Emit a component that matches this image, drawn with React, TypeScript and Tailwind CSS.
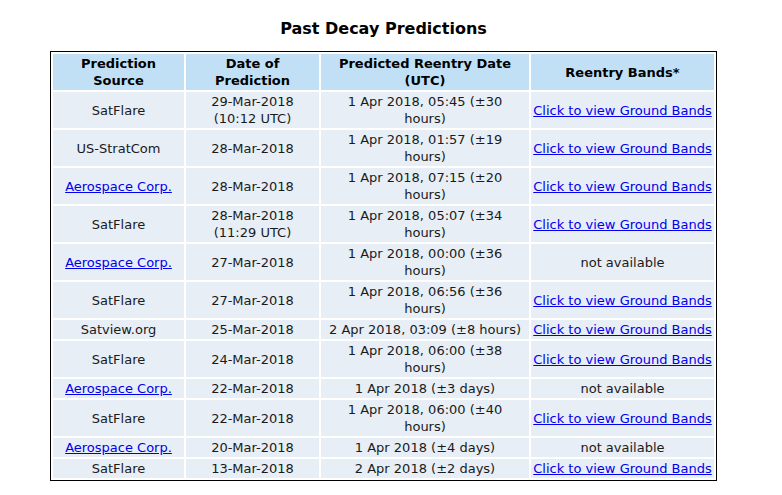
import React from 'react';

type Row = {
  source: string;
  sourceLink?: boolean;
  date: string[];
  reentry: string[];
  bands: boolean;
};

const rows: Row[] = [
  { source: 'SatFlare', date: ['29-Mar-2018', '(10:12 UTC)'], reentry: ['1 Apr 2018, 05:45 (±30', 'hours)'], bands: true },
  { source: 'US-StratCom', date: ['28-Mar-2018'], reentry: ['1 Apr 2018, 01:57 (±19', 'hours)'], bands: true },
  { source: 'Aerospace Corp.', sourceLink: true, date: ['28-Mar-2018'], reentry: ['1 Apr 2018, 07:15 (±20', 'hours)'], bands: true },
  { source: 'SatFlare', date: ['28-Mar-2018', '(11:29 UTC)'], reentry: ['1 Apr 2018, 05:07 (±34', 'hours)'], bands: true },
  { source: 'Aerospace Corp.', sourceLink: true, date: ['27-Mar-2018'], reentry: ['1 Apr 2018, 00:00 (±36', 'hours)'], bands: false },
  { source: 'SatFlare', date: ['27-Mar-2018'], reentry: ['1 Apr 2018, 06:56 (±36', 'hours)'], bands: true },
  { source: 'Satview.org', date: ['25-Mar-2018'], reentry: ['2 Apr 2018, 03:09 (±8 hours)'], bands: true },
  { source: 'SatFlare', date: ['24-Mar-2018'], reentry: ['1 Apr 2018, 06:00 (±38', 'hours)'], bands: true },
  { source: 'Aerospace Corp.', sourceLink: true, date: ['22-Mar-2018'], reentry: ['1 Apr 2018 (±3 days)'], bands: false },
  { source: 'SatFlare', date: ['22-Mar-2018'], reentry: ['1 Apr 2018, 06:00 (±40', 'hours)'], bands: true },
  { source: 'Aerospace Corp.', sourceLink: true, date: ['20-Mar-2018'], reentry: ['1 Apr 2018 (±4 days)'], bands: false },
  { source: 'SatFlare', date: ['13-Mar-2018'], reentry: ['2 Apr 2018 (±2 days)'], bands: true },
];

const headers = [
  ['Prediction', 'Source'],
  ['Date of', 'Prediction'],
  ['Predicted Reentry Date', '(UTC)'],
  ['Reentry Bands*'],
];

function Lines({ lines }: { lines: string[] }) {
  return (
    <>
      {lines.map((l, i) => (
        <div key={i} className="whitespace-nowrap">{l}</div>
      ))}
    </>
  );
}

const linkCls = 'text-[#0000ee] underline';

export default function App() {
  return (
    <div className="w-[767px] bg-white pt-[18px] pb-4 font-['DejaVu_Sans',Verdana,sans-serif] text-[13px] leading-[17px] text-[#1a1a1a]">
      <h2 className="text-center text-[16px] leading-[22px] font-bold text-black mb-[11px]">
        Past Decay Predictions
      </h2>

      <table className="mx-auto table-fixed border border-black border-separate border-spacing-[2px]">
        <colgroup>
          <col className="w-[131px]" />
          <col className="w-[133px]" />
          <col className="w-[208px]" />
          <col className="w-[183px]" />
        </colgroup>
        <thead>
          <tr>
            {headers.map((h, i) => (
              <th key={i} className="bg-[#c1e0f5] px-0 py-px text-center align-middle font-bold text-black">
                <Lines lines={h} />
              </th>
            ))}
          </tr>
        </thead>
        <tbody>
          {rows.map((r, i) => (
            <tr key={i}>
              <td className="bg-[#e7eef6] px-0 py-px text-center align-middle">
                {r.sourceLink ? <a href="#" className={linkCls}>{r.source}</a> : r.source}
              </td>
              <td className="bg-[#e7eef6] px-0 py-px text-center align-middle">
                <Lines lines={r.date} />
              </td>
              <td className="bg-[#e7eef6] px-0 py-px text-center align-middle">
                <Lines lines={r.reentry} />
              </td>
              <td className="bg-[#e7eef6] px-0 py-px text-center align-middle whitespace-nowrap">
                {r.bands ? <a href="#" className={linkCls}>Click to view Ground Bands</a> : 'not available'}
              </td>
            </tr>
          ))}
        </tbody>
      </table>
    </div>
  );
}
